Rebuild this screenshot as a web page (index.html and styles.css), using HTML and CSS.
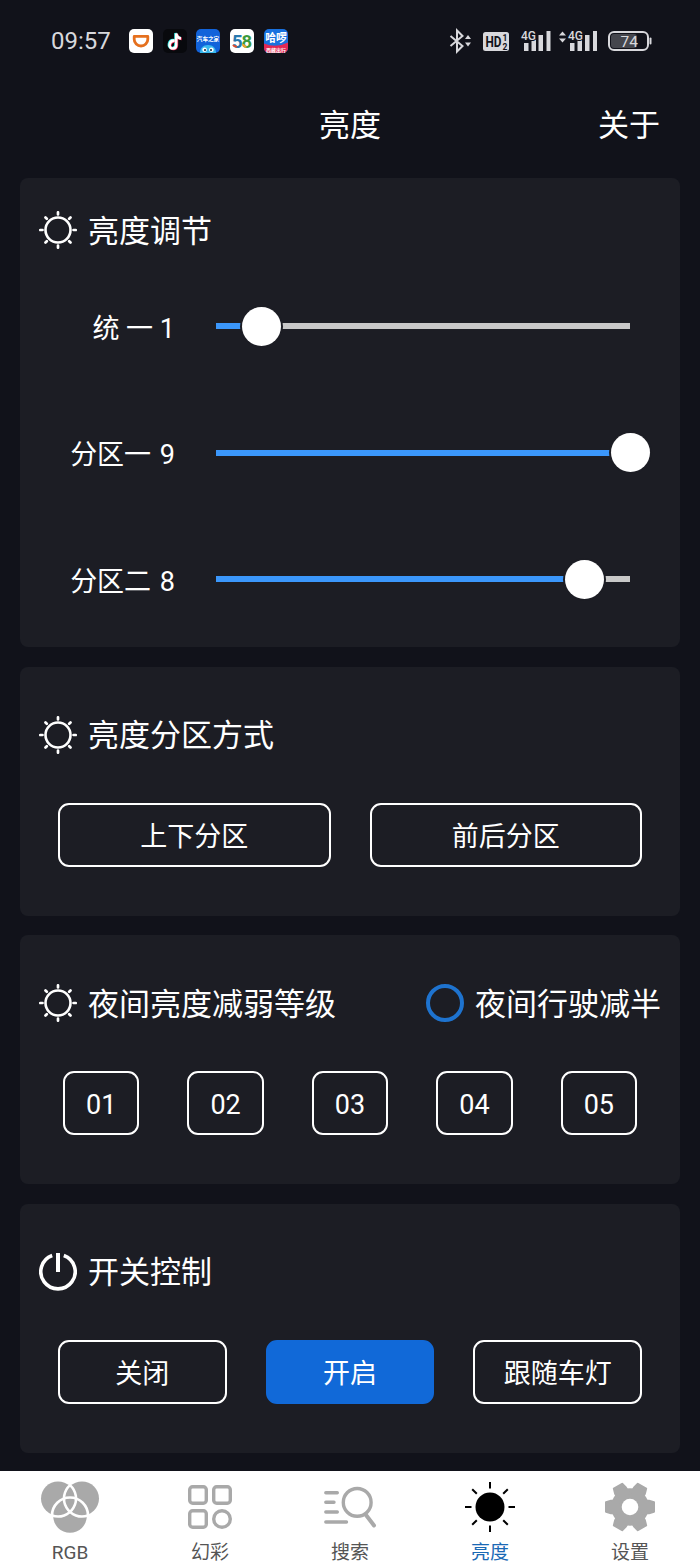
FILE: index.html
```html
<!DOCTYPE html>
<html lang="zh-CN">
  <head>
    <meta charset="UTF-8" />
    <meta name="viewport" content="width=device-width, initial-scale=1.0" />
    <title>亮度</title>
    <link rel="stylesheet" href="styles.css">
  </head>
  <body>
    <svg class="defs" aria-hidden="true">
      <symbol id="sun" viewBox="0 0 38 38">
        <g fill="none" stroke="currentColor">
          <circle cx="19" cy="19" r="12.5" stroke-width="2.6" />
          <path stroke-width="2.7" stroke-linecap="round" d="M19 1.300v2.200M19 34.500v2.200M1.300 19h2.200M34.500 19h2.200M6.500 6.500l1.300 1.300M30.200 30.200l1.300 1.300M6.500 31.500l1.300-1.300M30.200 7.800l1.300-1.300" />
        </g>
      </symbol>
    </svg>

    <div class="statusbar">
      <span class="time">09:57</span>
      <div class="apps">
        <svg viewBox="0 0 24 24"><rect width="24" height="24" rx="5" fill="#fff" /><path d="M5.200 7.400h13.600v2.800a6.800 6.800 0 0 1-13.600 0z" fill="none" stroke="#e5701e" stroke-width="2.800" stroke-linejoin="round" /></svg>
        <svg viewBox="0 0 24 24"><rect width="24" height="24" rx="5" fill="#08090d" /><g fill="none" stroke-width="2.600"><path stroke="#25e5e0" d="M11 11.200c-6-.6-7 7.800-1.800 7.800 2 0 3.300-1.400 3.300-3.400V4c.5 3 2.200 4.600 4.800 4.900" /><path stroke="#f52b57" d="M12.400 12.200c-6-.6-7 7.800-1.800 7.800 2 0 3.300-1.400 3.300-3.400V5c.5 3 2.200 4.600 4.800 4.900" /><path stroke="#fff" d="M11.700 11.700c-6-.6-7 7.800-1.800 7.800 2 0 3.300-1.400 3.300-3.400V4.500c.5 3 2.200 4.600 4.800 4.900" /></g></svg>
        <svg viewBox="0 0 24 24"><rect width="24" height="24" rx="5" fill="#1263da" /><text x="12" y="12" class="app-text" font-size="5.600" fill="#fff">汽车之家</text><path d="M4 24c0-5 3-8 8-8s8 3 8 8z" fill="#39b9ee" /><circle cx="8.600" cy="20.800" r="2.300" fill="#fff" /><circle cx="15.400" cy="20.800" r="2.300" fill="#fff" /><circle cx="9" cy="21" r="1" fill="#123" /><circle cx="15" cy="21" r="1" fill="#123" /></svg>
        <svg viewBox="0 0 24 24"><rect width="24" height="24" rx="5" fill="#fff" /><text x="7.300" y="18.700" class="app-text" font-size="18.500" fill="#2878ae">5</text><text x="16.700" y="18.700" class="app-text" font-size="18.500" fill="#3c9a3d">8</text><path d="M3 16q1.500 2 4 1.500" fill="none" stroke="#e64b2c" stroke-width="2" /><path d="M13.200 15q0 2.700 3.300 2.700" fill="none" stroke="#f0a12b" stroke-width="2" /></svg>
        <svg viewBox="0 0 24 24"><rect width="24" height="24" rx="5" fill="#1971df" /><path d="M0 14.500q12 5 24-1V19a5 5 0 0 1-5 5H5a5 5 0 0 1-5-5z" fill="#e22855" /><text x="12" y="13" class="app-text" font-size="10.800" fill="#fff">哈啰</text><text x="12" y="22.500" class="app-text" font-size="5" fill="#fff">西藏出行</text></svg>
      </div>
      <svg class="signals" viewBox="0 0 204 30">
        <g fill="none" stroke="#d8d8dc" stroke-width="2">
          <path d="M2.500 10l12 10-5.500 5.500V4.500l5.500 5.500-12 10" />
          <rect x="161" y="6" width="39" height="18" rx="5" />
        </g>
        <g fill="#d8d8dc">
          <path d="M17 13l3-4 3 4zM17 16.500l3 4 3-4z" />
          <rect x="35" y="6" width="26" height="19" rx="2.500" />
          <path d="M76 17h4.500v8H76zM83.500 13.500H88V25h-4.500zM90.500 9H95v16h-4.500zM98.500 5h4v20h-4z" />
          <path d="M122 17h4.500v8H122zM129.500 13.500h4.500V25h-4.500zM137 9h4.500v16H137zM145 5h4v20h-4z" />
          <path d="M111 9.500l3.500-4 3.500 4zM111 12.500l3.500 4 3.500-4z" />
          <rect x="201.500" y="11.500" width="2" height="7" rx="1" />
        </g>
        <rect x="163" y="8" width="26" height="14" rx="3" fill="#45464d" />
        <g class="signal-text">
          <text x="37.500" y="21" font-size="14.500" font-weight="700" fill="#11121a" textLength="16" lengthAdjust="spacingAndGlyphs">HD</text>
          <text x="54.500" y="14.500" font-size="8.500" font-weight="700" fill="#11121a">1</text>
          <text x="54.500" y="23.500" font-size="8.500" font-weight="700" fill="#11121a">2</text>
          <g fill="#d8d8dc" stroke="#11121a" stroke-width="2" paint-order="stroke" font-weight="500">
            <text x="73" y="14" font-size="13" textLength="15" lengthAdjust="spacingAndGlyphs">4G</text>
            <text x="120" y="14" font-size="13" textLength="15" lengthAdjust="spacingAndGlyphs">4G</text>
          </g>
          <text x="172.500" y="20.500" font-size="15.500" fill="#d8d8dc">74</text>
        </g>
      </svg>
    </div>

    <header class="topbar">
      <h1>亮度</h1>
      <a class="about">关于</a>
    </header>

    <main>
      <section class="card card-sliders">
        <div class="card-head"><svg class="icon"><use href="#sun" /></svg><h2>亮度调节</h2></div>
        <div class="slider-row">
          <span class="label">统 一 1</span>
          <div class="track"><div class="fill" style="width: 11.11%"><i class="thumb"></i></div></div>
        </div>
        <div class="slider-row">
          <span class="label zone">分区一 9</span>
          <div class="track"><div class="fill" style="width: 100%"><i class="thumb"></i></div></div>
        </div>
        <div class="slider-row">
          <span class="label zone">分区二 8</span>
          <div class="track"><div class="fill" style="width: 88.89%"><i class="thumb"></i></div></div>
        </div>
      </section>

      <section class="card">
        <div class="card-head"><svg class="icon"><use href="#sun" /></svg><h2>亮度分区方式</h2></div>
        <div class="buttons">
          <button class="btn">上下分区</button>
          <button class="btn">前后分区</button>
        </div>
      </section>

      <section class="card">
        <div class="card-head">
          <svg class="icon"><use href="#sun" /></svg><h2>夜间亮度减弱等级</h2>
          <label class="half"><span class="radio"></span><span class="half-text">夜间行驶减半</span></label>
        </div>
        <div class="buttons levels">
          <button class="btn">01</button>
          <button class="btn">02</button>
          <button class="btn">03</button>
          <button class="btn">04</button>
          <button class="btn">05</button>
        </div>
      </section>

      <section class="card">
        <div class="card-head">
          <svg class="icon" viewBox="0 0 38 38"><path d="M13.200 2.500A17.200 17.200 0 1 0 24.800 2.500" fill="none" stroke="currentColor" stroke-width="3.600" /><path d="M19 0v19" stroke="currentColor" stroke-width="4" /></svg>
          <h2>开关控制</h2>
        </div>
        <div class="buttons">
          <button class="btn">关闭</button>
          <button class="btn active">开启</button>
          <button class="btn">跟随车灯</button>
        </div>
      </section>
    </main>

    <nav class="tabbar">
      <a class="tab">
        <svg viewBox="0 0 60 54">
          <g fill="#a9a9a9"><circle cx="18" cy="18.500" r="17" /><circle cx="42" cy="18.500" r="17" /><circle cx="30" cy="36" r="16.800" /></g>
          <g fill="none" stroke="#fff" stroke-width="2.600">
            <path d="M30 5.100A18 18 0 0 1 12 35.500" />
            <path d="M30 5.100A18 18 0 0 0 48 35.500" />
            <path d="M12 35.500A18 18 0 0 1 48 35.500" />
          </g>
        </svg>
        RGB
      </a>
      <a class="tab">
        <svg viewBox="0 0 60 54"><g fill="none" stroke="#a9a9a9" stroke-width="3.400"><rect x="9.700" y="6.700" width="16.600" height="16.600" rx="3" /><rect x="33.700" y="6.700" width="16.600" height="16.600" rx="3" /><rect x="9.700" y="30.700" width="16.600" height="16.600" rx="3" /><circle cx="42" cy="39" r="8.300" /></g></svg>
        幻彩
      </a>
      <a class="tab">
        <svg viewBox="0 0 60 54"><g fill="none" stroke="#a9a9a9" stroke-width="3.400" stroke-linecap="round"><path d="M5.800 12.700h11.500M5.800 22.300H14M5.800 32h11.500M5.800 42h20.700" /><circle cx="37.200" cy="22.400" r="13.900" /><path stroke-width="4" d="M46 35l8 10.500" /></g></svg>
        搜索
      </a>
      <a class="tab current">
        <svg viewBox="0 0 60 54"><circle cx="30" cy="27" r="14.500" fill="#000" /><path stroke="#000" stroke-width="2" d="M30 2v6.500M30 45.500V52M5 27h6.500M48.500 27H55M12.200 9.200l4.600 4.600M43.200 40.200l4.600 4.600M12.200 44.800l4.600-4.600M43.200 13.800l4.600-4.600" /></svg>
        亮度
      </a>
      <a class="tab">
        <svg viewBox="0 0 60 54">
          <g fill="#a9a9a9" stroke="#a9a9a9" stroke-width="2" stroke-linejoin="round">
            <circle cx="30" cy="27" r="17.800" />
            <path id="tooth" d="M6 22.200l5-1.400h38l5 1.400v9.600l-5 1.400H11l-5-1.400z" />
            <use href="#tooth" transform="rotate(60 30 27)" />
            <use href="#tooth" transform="rotate(120 30 27)" />
          </g>
          <circle cx="30" cy="27" r="8.300" fill="#fff" />
        </svg>
        设置
      </a>
    </nav>
  </body>
</html>
```
FILE: styles.css
```css
:root {
  --bg: #11121a;
  --card-bg: #1c1d24;
  --text: #fff;
  --blue: #1169d8;
  --font: Roboto, "Noto Sans CJK SC", sans-serif;
}
* { box-sizing: border-box; }
body {
  margin: 0;
  width: 700px;
  height: 1563px;
  display: flex;
  flex-direction: column;
  overflow: hidden;
  background: var(--bg);
  color: var(--text);
  font-family: var(--font);
}
h1, h2 { margin: 0; font-size: 31px; font-weight: inherit; line-height: 40px; }
.defs { position: absolute; width: 0; height: 0; }

.statusbar {
  height: 81px;
  flex: none;
  display: flex;
  align-items: center;
  padding: 0 48px 0 51px;
}
.time { width: 78px; font: 24px Roboto, sans-serif; color: #d8d8dc; }
.apps { display: flex; gap: 9.7px; }
.apps svg { width: 24px; height: 24px; }
.app-text { font-family: var(--font); font-weight: 700; text-anchor: middle; }
.signals { width: 204px; height: 30px; margin-left: auto; }
.signal-text { font-family: Roboto, sans-serif; }

.topbar {
  height: 97px;
  flex: none;
  display: grid;
  grid-template-columns: 1fr auto 1fr;
  align-items: center;
  padding: 0 40px 8px;
}
.topbar h1 { grid-column: 2; }
.about { font-size: 31px; line-height: 40px; text-align: right; }

main { display: flex; flex-direction: column; gap: 19.5px; padding: 0 20px; }
.card {
  height: 249px;
  padding-top: 35px;
  border-radius: 8px;
  background: var(--card-bg);
}
.card-sliders { height: 469px; padding-top: 19px; }
.card-head {
  height: 66px;
  display: flex;
  align-items: center;
  padding: 0 19px;
}
.card-head h2, .half-text { padding-top: 3px; }
.icon { width: 38px; height: 38px; margin-right: 11px; }
.half {
  margin-left: auto;
  display: flex;
  align-items: center;
  font-size: 31px;
  line-height: 40px;
}
.radio {
  width: 38px;
  height: 38px;
  margin-right: 11px;
  border: 4px solid #1e73cf;
  border-radius: 50%;
}

.slider-row {
  height: 126.5px;
  display: flex;
  align-items: center;
  padding-right: 50px;
}
.label { width: 155px; margin-right: 41px; font-size: 27px; text-align: right; white-space: pre; }
.zone { word-spacing: 2px; }
.track { flex: 1; height: 6px; background: #c8c8c8; }
.fill {
  height: 100%;
  display: flex;
  justify-content: flex-end;
  align-items: center;
  background: #3b97fb;
}
.thumb {
  width: 39px;
  height: 39px;
  flex: none;
  margin-right: -19.5px;
  border-radius: 50%;
  background: #fff;
  box-shadow: 0 0 0 2px var(--card-bg);
}

.buttons { display: flex; gap: 39px; padding: 35px 38px 0; }
.btn {
  flex: 1;
  height: 64px;
  padding: 0;
  border: 2px solid #fff;
  border-radius: 11px;
  background: none;
  color: inherit;
  font: inherit;
  font-size: 27px;
}
.btn.active { background: var(--blue); border-color: var(--blue); }
.levels { gap: 48px; padding: 35px 43px 0; }
.levels .btn { padding-top: 3px; }

.tabbar {
  height: 92px;
  flex: none;
  margin-top: auto;
  display: flex;
  background: #fff;
}
.tab {
  flex: 1;
  display: flex;
  flex-direction: column;
  align-items: center;
  padding-top: 9px;
  color: #555;
  font-size: 19px;
  line-height: 22px;
}
.tab svg { width: 60px; height: 54px; flex: none; margin-bottom: 8px; }
.tab.current { color: #1a69b5; }
```
